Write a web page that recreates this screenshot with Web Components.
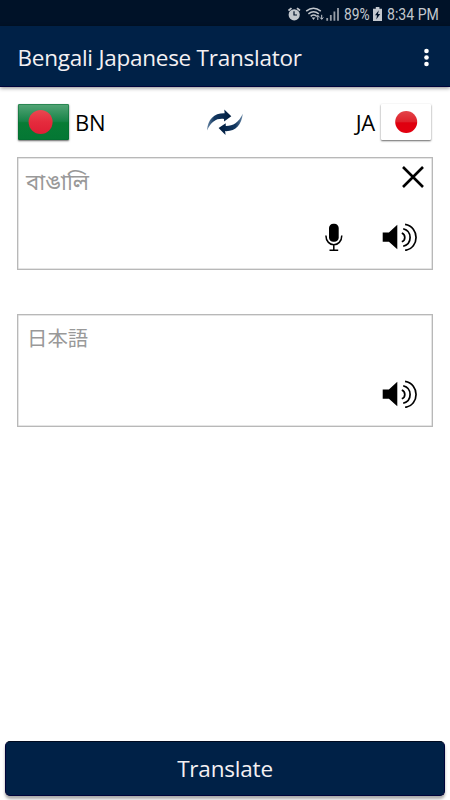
<!DOCTYPE html>
<html lang="en"><head><meta charset="utf-8"><title>Bengali Japanese Translator</title>
<style>html,body{margin:0;height:100%;background:#fff}</style></head><body>
<translator-app></translator-app>
<script>
const define=(name,html)=>customElements.define(name,class extends HTMLElement{
 constructor(){super();const t=document.createElement('template');t.innerHTML=html;this.attachShadow({mode:'open'}).append(t.content.cloneNode(true));}
});
define('status-bar',`<style>
:host{display:flex;box-sizing:border-box;height:26px;background:#001228;color:#c3c8ce;align-items:center;padding:3px 11px 0 0;justify-content:flex-end;font:16px/20px Roboto,sans-serif}
svg{display:block;flex:none}.t{display:inline-block;white-space:nowrap;transform-origin:0 50%}
.p{width:26px;margin-left:4px}.p span{transform:scaleX(.86)}.c{width:52px;margin-left:5px}.c span{transform:scaleX(.88)}
</style>
<svg width="52" height="16" viewBox="288 6 52 16" fill="none" stroke="#c3c8ce">
<circle cx="294.2" cy="13.8" r="5.6" fill="#c3c8ce" stroke="none"/><path d="M294 10.3v3.7h3" stroke="#001228" stroke-width="1.2"/><path d="M288.5 9.5l3-2.4M300 9.5l-3-2.4" stroke-width="1.8"/>
<path d="M306.2 10.2q7.3-5.8 14.6 0M308.4 12.8q5.2-4.2 10.4 0M310.7 15.3q3-2.4 5.8-.2" stroke-width="1.5"/><path d="M311.7 16.5h3.6l-1.8 2.5z" fill="#c3c8ce" stroke="none"/>
<path d="M317.8 19v-4.5m-1.6 1.7l1.6-1.8 1.6 1.8M321.7 13.8v4.4m-1.6-1.7l1.6 1.8 1.6-1.8" stroke-width="1"/>
<path d="M327.2 17v2.7M330.8 14v5.7M334.4 10.5v9.2M338 7v12.7" stroke-width="1.8" stroke="#969da6"/></svg>
<div class="p"><span class="t">89%</span></div>
<svg style="margin-left:3px" width="9" height="15" viewBox="0 0 9 15"><path d="M2.8 0h3.6v1.7H9V14H0V1.7h2.8z" fill="#c3c8ce"/><path d="M5.8 3.2L2 8.3h2L3.3 12.5 7.2 7H5z" fill="#001228"/></svg>
<div class="c"><span class="t">8:34 PM</span></div>`);
define('app-bar',`<style>
:host{display:flex;box-sizing:border-box;height:61px;background:#002147;border-bottom:1px solid #00043a;box-shadow:0 1px 4px #0007;align-items:center;justify-content:space-between;padding:3px 21.5px 0 17.5px;color:#f4f0f2;font:22.5px/30px "Open Sans",sans-serif}
.t{white-space:nowrap;letter-spacing:-.25px}svg{display:block}</style><span class="t"><slot></slot></span>
<svg width="5" height="20" viewBox="0 0 5 20" fill="#fff"><circle cx="2.5" cy="3" r="2.3"/><circle cx="2.5" cy="9.5" r="2.3"/><circle cx="2.5" cy="16" r="2.3"/></svg>`);
define('flag-bn',`<style>:host{display:block;width:51px;height:36px;border-radius:1px;box-shadow:0 1px 2px #0009}svg{display:block}</style>
<svg width="51" height="36"><defs><linearGradient id="g" x2="0" y2="1"><stop stop-color="#54a577"/><stop offset=".48" stop-color="#178347"/><stop offset=".52" stop-color="#087c35"/><stop offset="1" stop-color="#047734"/></linearGradient><linearGradient id="r" x2="0" y2="1"><stop stop-color="#e94850"/><stop offset=".5" stop-color="#e52b3d"/><stop offset="1" stop-color="#df1e35"/></linearGradient></defs><rect width="51" height="36" rx="1" fill="url(#g)"/><circle cx="22.6" cy="18" r="12" fill="url(#r)"/><rect x=".5" y=".5" width="50" height="35" rx="1" fill="none" stroke="#00692d" opacity=".5"/></svg>`);
define('flag-ja',`<style>:host{display:block;width:50px;height:36px;background:#fff;border-radius:1px;box-shadow:0 1px 2px #0009}svg{display:block}</style>
<svg width="50" height="36"><defs><linearGradient id="r" x2="0" y2="1"><stop stop-color="#e3444a"/><stop offset=".48" stop-color="#df222b"/><stop offset=".54" stop-color="#df000f"/><stop offset="1" stop-color="#e2000f"/></linearGradient></defs><circle cx="25.2" cy="18" r="11" fill="url(#r)"/></svg>`);
define('swap-icon',`<style>:host{display:block}svg{display:block}</style>
<svg width="36" height="26" viewBox="207 109 36 26"><defs><linearGradient id="a" x1="0" x2="1"><stop stop-color="#6685a4"/><stop offset=".3" stop-color="#123760"/><stop offset="1" stop-color="#001c3e"/></linearGradient><linearGradient id="b" x1="1" x2="0"><stop stop-color="#6685a4"/><stop offset=".3" stop-color="#123760"/><stop offset="1" stop-color="#001c3e"/></linearGradient></defs>
<path fill="url(#a)" d="M207 130.5C208 119 214 113 224.6 113.2L224.3 109.6 231.3 116.3 224.1 121.6 224 118.9C216.5 118.2 211.5 121 207 130.5Z"/>
<path fill="url(#b)" d="M242.8 113.8C241.5 125 235.6 131.6 225.2 131.1L225.5 134.9 218.6 128.1 225.7 123.3 225.8 125.9C233 126 238.4 123 242.8 113.8Z"/></svg>`);
define('language-row',`<style>:host{display:grid;grid-template-columns:1fr auto 1fr;align-items:center;height:36px;margin:17px 19px 0 18px;color:#000;font:22px/30px "Open Sans",sans-serif}
div{display:flex;align-items:center;gap:6px}.r{justify-content:flex-end;gap:6px}span{letter-spacing:-.3px}</style>
<div><flag-bn></flag-bn><span>BN</span></div><swap-icon></swap-icon><div class="r"><span>JA</span><flag-ja></flag-ja></div>`);
define('speaker-icon',`<style>:host{display:block}svg{display:block}</style>
<svg width="36" height="28" viewBox="382 223 36 28"><path d="M382.7 232.6h6.2l8.4-7.8v24.4l-8.4-7.5h-6.2z" fill="#000"/><path d="M401.8 233q3 1.2 3 4.5t-3 4.3M403.2 228.8c9.2 2.5 9.2 15 0 17.5M405.1 224.4c14.6 2.5 14.6 23.6 0 26" fill="none" stroke="#000" stroke-width="1.7"/></svg>`);
define('mic-icon',`<style>:host{display:block}svg{display:block}</style>
<svg width="18" height="28" viewBox="325 223 18 28"><rect x="329" y="223.7" width="9.7" height="18" rx="4.3"/><path d="M325.9 235.5c0 12.2 15.9 12.2 15.9 0M333.8 244.8v5.3M329.5 250.2h8.7" fill="none" stroke="#000" stroke-width="1.5"/></svg>`);
define('close-icon',`<style>:host{display:block}svg{display:block}</style>
<svg width="22" height="22"><path d="M1 1L21 21M21 1L1 21" stroke="#000" stroke-width="2.6"/></svg>`);
define('text-panel',`<style>:host{display:flex;flex-direction:column;justify-content:space-between;box-sizing:border-box;height:113px;margin:0 17px;border:1px solid #b8b8b8;box-shadow:inset 0 0 0 .5px #ccc;padding:8px 14px 18px 9px;color:#999;font:20.7px/30px "Open Sans","Noto Sans","Noto Sans Bengali","Noto Sans CJK JP",sans-serif}
.top{display:flex;justify-content:space-between;align-items:flex-start}.bottom{display:flex;justify-content:flex-end;gap:39px}::slotted(close-icon){margin:0 -5.5px 0 0}::slotted(.bn){font-size:22.2px;margin-left:-1px;padding-top:1px}::slotted(.ja){font-size:20.4px}</style>
<div class="top"><slot></slot><slot name="corner"></slot></div><div class="bottom"><slot name="action"></slot></div>`);
define('translate-button',`<style>:host{display:flex;box-sizing:border-box;height:55px;margin:0 5px 4px;border-radius:5px;background:#002147;border:1px solid #00043a;border-top-color:#000b20;box-shadow:0 3px 3px #0005;align-items:center;justify-content:center;color:#f4f0f2;font:22.5px/30px "Open Sans",sans-serif;letter-spacing:-.2px;padding-top:1px}</style><slot></slot>`);
define('translator-app',`<style>:host{display:flex;flex-direction:column;height:800px;background:#fff}.space{flex:1}.one{margin-top:17px}.two{margin-top:44px}</style>
<status-bar></status-bar><app-bar>Bengali Japanese Translator</app-bar><language-row></language-row>
<text-panel class="one"><span class="bn" lang="bn">বাঙালি</span><close-icon slot="corner"></close-icon><mic-icon slot="action"></mic-icon><speaker-icon slot="action"></speaker-icon></text-panel>
<text-panel class="two"><span class="ja" lang="ja">日本語</span><speaker-icon slot="action"></speaker-icon></text-panel>
<div class="space"></div><translate-button>Translate</translate-button>`);
</script></body></html>
